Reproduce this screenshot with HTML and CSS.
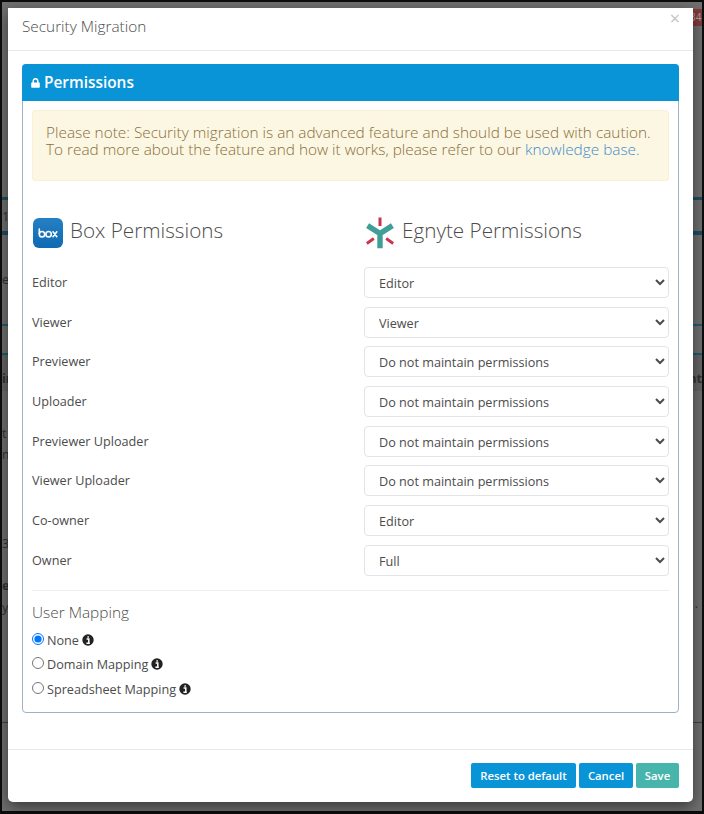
FILE: index.html
```html
<!DOCTYPE html>
<html lang="en">
<head>
    <meta charset="UTF-8">
    <meta name="viewport" content="width=device-width, initial-scale=1.0">
    <title>Security Migration</title>
    <link rel="stylesheet" href="styles.css">
</head>
<body>
    <!-- Page behind the modal -->
    <div class="page">
        <div class="page-row page-top"><span></span><span class="page-badge">34</span></div>
        <div class="page-row page-tabs"><span>1</span></div>
        <div class="page-row page-intro"><span>e</span></div>
        <div class="page-row page-bar"></div>
        <div class="page-row page-head"><b>in</b><b>nt</b></div>
        <div class="page-row page-text"><span>t<br>m</span></div>
        <div class="page-row page-count"><span>3</span></div>
        <div class="page-row page-notes"><span><b>es</b><br>y</span><span class="page-dot">.</span></div>
        <div class="page-row page-end"></div>
    </div>

    <div class="modal">
        <div class="modal-header">
            <h4>Security Migration</h4>
            <button class="close" type="button">×</button>
        </div>

        <div class="modal-body">
            <div class="panel">
                <div class="panel-heading">
                    <svg class="lock" viewBox="0 0 9 10"><path d="M2.2 5V3a2.3 2.3 0 0 1 4.6 0v2" fill="none" stroke="#fff" stroke-width="1.5"/><rect x="0.2" y="4.4" width="8.6" height="5.4" rx="0.7" fill="#fff"/></svg>
                    <h3>Permissions</h3>
                </div>

                <div class="panel-body">
                    <div class="alert">
                        <p>Please note: Security migration is an advanced feature and should be used with caution.</p>
                        <p>To read more about the feature and how it works, please refer to our <a href="#">knowledge base.</a></p>
                    </div>

                    <div class="titles">
                        <div class="title">
                            <svg class="logo-box" viewBox="0 0 30 30">
                                <defs><linearGradient id="boxBlue" x1="0" y1="0" x2="0" y2="1"><stop offset="0" stop-color="#2580c3"/><stop offset="1" stop-color="#0f69b4"/></linearGradient></defs>
                                <rect width="30" height="30" rx="6" fill="url(#boxBlue)"/>
                                <g fill="none" stroke="#fff" stroke-width="1.6" stroke-linecap="round">
                                    <path d="M6.3 11v4.8"/>
                                    <circle cx="9" cy="16.2" r="2.7"/>
                                    <circle cx="15.6" cy="16.2" r="2.7"/>
                                    <path d="M20 13.8l3.8 4.9M23.8 13.8L20 18.7"/>
                                </g>
                            </svg>
                            <h2>Box Permissions</h2>
                        </div>
                        <div class="title">
                            <svg class="logo-egnyte" viewBox="0 0 28 32">
                                <path d="M1.6 8.6L14 16.5 26.4 8.6M14 16v15.2" fill="none" stroke="#3f9f98" stroke-width="5.4"/>
                                <path d="M14 .5v8.5M.8 26.4l7-4.8M27.2 26.4l-7-4.8" fill="none" stroke="#c8354f" stroke-width="3"/>
                            </svg>
                            <h2>Egnyte Permissions</h2>
                        </div>
                    </div>

                    <div class="rows">
                        <div class="row"><label>Editor</label><select><option>Editor</option></select></div>
                        <div class="row"><label>Viewer</label><select><option>Viewer</option></select></div>
                        <div class="row"><label>Previewer</label><select><option>Do not maintain permissions</option></select></div>
                        <div class="row"><label>Uploader</label><select><option>Do not maintain permissions</option></select></div>
                        <div class="row"><label>Previewer Uploader</label><select><option>Do not maintain permissions</option></select></div>
                        <div class="row"><label>Viewer Uploader</label><select><option>Do not maintain permissions</option></select></div>
                        <div class="row"><label>Co-owner</label><select><option>Editor</option></select></div>
                        <div class="row"><label>Owner</label><select><option>Full</option></select></div>
                    </div>

                    <div class="mapping">
                        <h4>User Mapping</h4>
                        <label class="radio"><input type="radio" name="mapping" checked><span>None</span>
                            <svg class="info" viewBox="0 0 12 12"><circle cx="6" cy="6" r="5.7"/><path d="M4.6 5h2.2v4M4.4 9.2h3.4M5.4 2.9h1.5"/></svg></label>
                        <label class="radio"><input type="radio" name="mapping"><span>Domain Mapping</span>
                            <svg class="info" viewBox="0 0 12 12"><circle cx="6" cy="6" r="5.7"/><path d="M4.6 5h2.2v4M4.4 9.2h3.4M5.4 2.9h1.5"/></svg></label>
                        <label class="radio"><input type="radio" name="mapping"><span>Spreadsheet Mapping</span>
                            <svg class="info" viewBox="0 0 12 12"><circle cx="6" cy="6" r="5.7"/><path d="M4.6 5h2.2v4M4.4 9.2h3.4M5.4 2.9h1.5"/></svg></label>
                    </div>
                </div>
            </div>
        </div>

        <div class="modal-footer">
            <button class="btn btn-reset" type="button">Reset to default</button>
            <button class="btn btn-cancel" type="button">Cancel</button>
            <button class="btn btn-save" type="button">Save</button>
        </div>
    </div>
</body>
</html>
```
FILE: styles.css
```css
* {
    margin: 0;
    padding: 0;
    box-sizing: border-box;
}

body {
    width: 704px;
    height: 814px;
    overflow: hidden;
    background: #0c0c0c;
    color: #4c4c4c;
    font-family: "Open Sans", sans-serif;
    font-size: 12.65px;
    padding: 2px 2px 3px;
}

/* Page behind the modal */
.page {
    height: 809px;
    background: #707070;
    color: #333;
    overflow: hidden;
    display: flex;
    flex-direction: column;
}

.page-row {
    display: flex;
    justify-content: space-between;
    flex: none;
}

.page-top {
    height: 195px;
}

.page-badge {
    width: 12px;
    height: 17px;
    margin-top: 7px;
    background: #843a3a;
    color: #aaa;
    font-size: 10px;
    line-height: 16px;
}

.page-tabs {
    height: 38px;
    border-top: 3px solid #1c4f63;
    border-bottom: 4px solid #1c4f63;
    padding-top: 7px;
}

.page-intro {
    height: 89px;
    padding-top: 35px;
}

.page-bar {
    height: 31px;
    border-top: 2px solid #1c5f70;
    border-bottom: 2px solid #1c5f70;
}

.page-head {
    height: 36px;
    padding-top: 14px;
    background: #666;
}

.page-text {
    height: 143px;
    padding-top: 32px;
    line-height: 21px;
}

.page-count {
    height: 38px;
}

.page-notes {
    height: 151px;
    padding-top: 2px;
    line-height: 22px;
    border-bottom: 1px solid #444;
    align-items: flex-start;
}

.page-dot {
    padding: 18px 4px 0 0;
}

.page-end {
    flex: 1;
}

.modal {
    position: absolute;
    left: 8px;
    top: 8px;
    width: 685px;
    height: 794px;
    background: #fff;
    border-radius: 0 0 5px 5px;
    box-shadow: 0 5px 15px rgba(0, 0, 0, 0.5);
    display: flex;
    flex-direction: column;
}

.modal-header {
    height: 43px;
    padding: 0 13px 0 14px;
    border-bottom: 1px solid #e8e8e8;
    display: flex;
    justify-content: space-between;
    align-items: flex-start;
}

.modal-header h4 {
    font-size: 15.35px;
    font-weight: 300;
    line-height: 20px;
    margin-top: 8px;
}

.close {
    border: none;
    background: none;
    color: #c4c4c4;
    font: 18px/20px "Open Sans", sans-serif;
}

.modal-body {
    flex: 1;
    padding: 13px 14px 0;
}

.panel {
    height: 649px;
    border: 1px solid #9cb2c6;
    border-radius: 4px;
}

.panel-heading {
    height: 37px;
    margin: -1px -1px 0;
    padding-left: 9px;
    background: #0994d8;
    border-radius: 4px 4px 0 0;
    color: #fff;
    display: flex;
    align-items: center;
    gap: 4px;
}

.panel-heading h3 {
    font-size: 15.4px;
    font-weight: 600;
}

.lock {
    width: 9px;
    height: 10px;
}

.panel-body {
    padding: 9px 9px 0;
}

.alert {
    height: 71px;
    padding: 14px 13px 0;
    background: #fcf7e3;
    border: 1px solid #fbf0d6;
    border-radius: 3px;
    color: #8a6d3b;
    font-size: 15.36px;
    font-weight: 300;
    line-height: 16.5px;
    white-space: nowrap;
}

.alert a {
    color: #428bca;
    text-decoration: none;
}

.titles {
    display: grid;
    grid-template-columns: 332px 1fr;
    height: 86px;
    padding-top: 36px;
}

.title {
    display: flex;
    gap: 7px;
}

.title h2 {
    font-size: 20.7px;
    font-weight: 300;
    line-height: 27px;
}

.logo-box {
    width: 30px;
    height: 30px;
    margin: 1px 0 0 1px;
}

.logo-egnyte {
    width: 28px;
    height: 32px;
    margin: 0 1px 0 2px;
}

.rows {
    display: flex;
    flex-direction: column;
    gap: 8.7px;
    padding-bottom: 14px;
    border-bottom: 1px solid #eee;
}

.row {
    display: grid;
    grid-template-columns: 332px 1fr;
    height: 31px;
}

.row label {
    line-height: 31px;
}

.row select {
    padding: 1px 0 0 10px;
    border: 1px solid #e2e4e8;
    border-radius: 4px;
    background: #fff;
    color: #4c4c4c;
    font: 12.65px "Open Sans", sans-serif;
}

.mapping h4 {
    margin: 11px 0 4px;
    font-size: 15.4px;
    font-weight: 300;
    line-height: 22px;
}

.radio {
    display: flex;
    align-items: center;
    height: 24.4px;
}

.radio input {
    width: 12px;
    height: 12px;
    margin: 0 3px 2px 0;
}

.info {
    width: 12px;
    height: 12px;
    margin-left: 3px;
    fill: #222;
}

.info path {
    fill: none;
    stroke: #fff;
    stroke-width: 1.5;
}

.modal-footer {
    height: 53px;
    padding: 13px 14px 0;
    border-top: 1px solid #e8e8e8;
    display: flex;
    justify-content: flex-end;
}

.btn {
    height: 25px;
    border: none;
    border-radius: 2px;
    background: #0994d8;
    color: #fff;
    font: 600 11.3px "Open Sans", sans-serif;
}

.btn-reset {
    width: 105px;
    margin-right: 3px;
}

.btn-cancel {
    width: 54px;
    margin-right: 3px;
}

.btn-save {
    width: 43px;
    background: #48b5ad;
}
```
